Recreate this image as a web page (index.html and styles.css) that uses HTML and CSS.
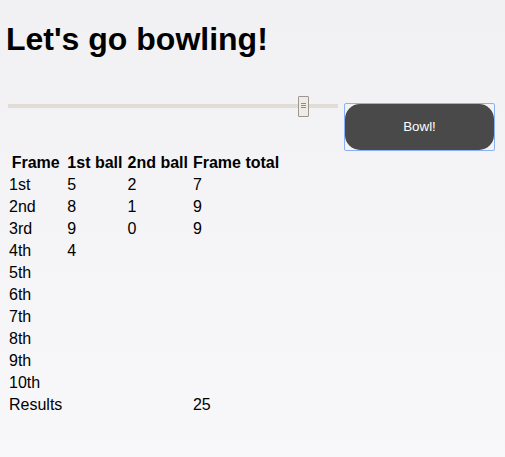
FILE: index.html
```html
<!DOCTYPE html>
<html lang="en">
<head>
<meta charset="utf-8">
<title>Bowling</title>
<link rel="stylesheet" href="styles.css">
</head>
<body>
<div class="page">
  <h1 class="title">Let's go bowling!</h1>
  <div class="controls">
    <input class="pins" type="range" min="0" max="11" value="10" aria-label="Pins">
    <div class="focus-ring">
      <button class="bowl" type="button">Bowl!</button>
    </div>
  </div>
  <table class="score">
    <thead>
      <tr><th>Frame</th><th>1st ball</th><th>2nd ball</th><th>Frame total</th></tr>
    </thead>
    <tbody>
      <tr><td>1st</td><td>5</td><td>2</td><td>7</td></tr>
      <tr><td>2nd</td><td>8</td><td>1</td><td>9</td></tr>
      <tr><td>3rd</td><td>9</td><td>0</td><td>9</td></tr>
      <tr><td>4th</td><td>4</td><td></td><td></td></tr>
      <tr><td>5th</td><td></td><td></td><td></td></tr>
      <tr><td>6th</td><td></td><td></td><td></td></tr>
      <tr><td>7th</td><td></td><td></td><td></td></tr>
      <tr><td>8th</td><td></td><td></td><td></td></tr>
      <tr><td>9th</td><td></td><td></td><td></td></tr>
      <tr><td>10th</td><td></td><td></td><td></td></tr>
      <tr><td>Results</td><td></td><td></td><td>25</td></tr>
    </tbody>
  </table>
</div>
</body>
</html>
```
FILE: styles.css
```css
html {
  min-height: 100%;
  background: linear-gradient(#f1f1f4, #f8f8fa);
}
body {
  margin: 0;
  font-family: "Liberation Sans", Arial, sans-serif;
  color: #000;
}
.page {
  padding: 0 6px;
}
.title {
  font-size: 32px;
  font-weight: bold;
  margin: 21.44px 0;
  line-height: normal;
}
.controls {
  display: flex;
  align-items: flex-start;
}
.pins {
  -webkit-appearance: none;
  appearance: none;
  width: 330px;
  height: 20px;
  margin: 16px 0 0 2px;
  padding: 0;
  background: transparent;
}
.pins::-webkit-slider-runnable-track {
  height: 4px;
  background: #e1ddd6;
  border: none;
}
.pins::-webkit-slider-thumb {
  -webkit-appearance: none;
  appearance: none;
  box-sizing: border-box;
  width: 11px;
  height: 21px;
  margin-top: -8px;
  border: 1px solid #9b968f;
  border-radius: 1px;
  background-color: #efece8;
  background-image:
    linear-gradient(#8f8a83, #8f8a83),
    linear-gradient(#8f8a83, #8f8a83),
    linear-gradient(#8f8a83, #8f8a83);
  background-size: 5px 1px;
  background-repeat: no-repeat;
  background-position: 2px 6px, 2px 8px, 2px 10px;
}
.focus-ring {
  margin: 23px 0 -1px 6px;
  border: 1px solid #8ab1f5;
  border-radius: 2px;
  display: flex;
}
.bowl {
  width: 149px;
  height: 46px;
  border: none;
  border-radius: 15px;
  background: #494949;
  color: #fff;
  font-family: "Liberation Sans", Arial, sans-serif;
  font-size: 13.33px;
  padding: 0;
  outline: none;
}
.score {
  border-spacing: 2px;
  font-size: 16px;
  margin-top: 1px;
}
.score th,
.score td {
  padding: 1px 2px 1px 1px;
  height: 18px;
}
.score th {
  font-weight: bold;
  text-align: center;
}
.score td {
  text-align: left;
}
```
